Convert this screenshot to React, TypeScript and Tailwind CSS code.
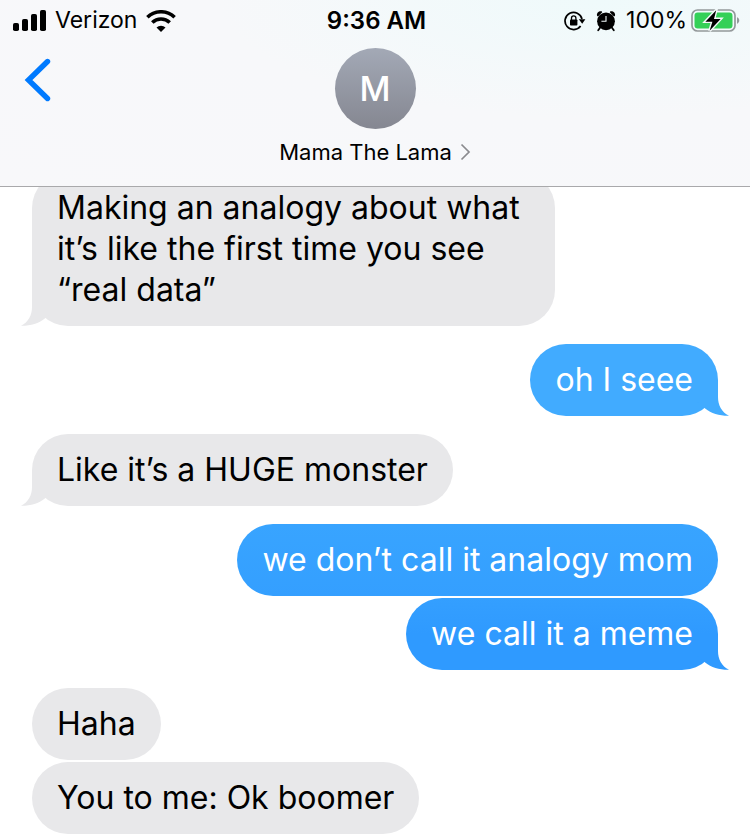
import clsx from "clsx";

interface IMessage {
  text: string;
  fromMe: boolean;
  tail?: boolean;
  color: string;
  tailColor: string;
}

const messages: IMessage[] = [
  {
    text: "Making an analogy about what it’s like the first time you see “real data”",
    fromMe: false,
    tail: true,
    color: "bg-[#e8e8ea]",
    tailColor: "text-[#e8e8ea]",
  },
  {
    text: "oh I seee",
    fromMe: true,
    tail: true,
    color: "bg-[#41abff]",
    tailColor: "text-[#41abff]",
  },
  {
    text: "Like it’s a HUGE monster",
    fromMe: false,
    tail: true,
    color: "bg-[#e8e8ea]",
    tailColor: "text-[#e8e8ea]",
  },
  {
    text: "we don’t call it analogy mom",
    fromMe: true,
    color: "bg-linear-to-b from-[#38a4ff] to-[#349fff]",
    tailColor: "",
  },
  {
    text: "we call it a meme",
    fromMe: true,
    tail: true,
    color: "bg-linear-to-b from-[#349fff] to-[#2f9aff] to-50%",
    tailColor: "text-[#2f9aff]",
  },
  {
    text: "Haha",
    fromMe: false,
    color: "bg-[#e8e8ea]",
    tailColor: "",
  },
  {
    text: "You to me: Ok boomer",
    fromMe: false,
    color: "bg-[#e8e8ea]",
    tailColor: "",
  },
];

const SignalIcon = () => (
  <svg width="33" height="22" viewBox="0 0 33 22" fill="#000">
    <rect x="0" y="13" width="6" height="8" rx="1.8" />
    <rect x="9" y="9" width="6" height="12" rx="1.8" />
    <rect x="18" y="4" width="6" height="17" rx="1.8" />
    <rect x="27" y="0" width="6" height="21" rx="1.8" />
  </svg>
);

const WifiIcon = () => (
  <svg width="30" height="22" viewBox="0 0 30 22" fill="none">
    <path d="M1.400 7.300A19.500 19.500 0 0 1 28.600 7.300" stroke="#000" strokeWidth="3.600" />
    <path d="M6.300 12.500A12.500 12.500 0 0 1 23.700 12.500" stroke="#000" strokeWidth="3.600" />
    <path d="M10.500 17.400a6.700 6.700 0 0 1 9 0L15 22z" fill="#000" />
  </svg>
);

const RotationLockIcon = () => (
  <svg width="22" height="20" viewBox="0 0 22 20" fill="none">
    <path d="M18 8A8.600 8.600 0 1 0 16.600 15" stroke="#000" strokeWidth="1.700" />
    <path d="M14.800 8.200h6.600L18.200 12.800z" fill="#000" />
    <rect x="6" y="8.500" width="7.400" height="6" rx="0.800" fill="#000" />
    <path d="M7.500 9V7.100a2.200 2.200 0 0 1 4.400 0V9" stroke="#000" strokeWidth="1.300" />
  </svg>
);

const AlarmIcon = () => (
  <svg width="20" height="22" viewBox="0 0 20 22" fill="none">
    <circle cx="10" cy="11.300" r="8.900" fill="#000" />
    <path d="M1 5.800C.4 3 2.800 .7 5.700 1.300L6.200 2.200L2 6.400z" fill="#000" />
    <path d="M19 5.800C19.600 3 17.200 .7 14.300 1.300L13.800 2.200L18 6.400z" fill="#000" />
    <path d="M4.200 17.500L2.200 20.300M15.800 17.500L17.800 20.300" stroke="#000" strokeWidth="1.800" strokeLinecap="round" />
    <path d="M10 6V11.300H5.400" stroke="#f1f9fa" strokeWidth="1.100" />
  </svg>
);

const BatteryIcon = () => (
  <svg width="49" height="24" viewBox="0 0 49 24" fill="none">
    <rect x="1" y="1" width="43" height="21" rx="5.500" stroke="#94999b" strokeWidth="1.700" />
    <path d="M46 8.300c3 1 3 5.400 0 6.400z" fill="#94999b" />
    <rect x="3.500" y="3.500" width="38" height="16" rx="3.200" fill="#34d058" />
    <path
      d="M25.200 1.200L14.400 12.700H21.400L18.600 21.800L29.600 10H23z"
      fill="#000"
      stroke="#f4fafb"
      strokeWidth="2.800"
      paintOrder="stroke"
    />
  </svg>
);

const BubbleTail = ({ fromMe, className }: { fromMe: boolean; className: string }) => (
  <svg
    width="34"
    height="36"
    viewBox="0 0 34 36"
    fill="currentColor"
    className={clsx(
      "absolute bottom-0",
      fromMe ? "-right-[11px] -scale-x-100" : "-left-[11px]",
      className
    )}
  >
    <path d="M11 0V17C11 25 7.500 32 0 35.800C9 36 18 33.500 23.500 28.800L34 20V0z" />
  </svg>
);

const StatusBar = () => {
  return (
    <div className="grid grid-cols-[1fr_auto_1fr] items-center h-[41px] pl-[13px] pr-[10px] text-[23px]">
      <div className="flex items-center gap-[9px]">
        <SignalIcon />
        <span>Verizon</span>
        <WifiIcon />
      </div>
      <span className="font-semibold text-2xl">9:36 AM</span>
      <div className="flex items-center justify-end">
        <RotationLockIcon />
        <span className="ml-[10px]">
          <AlarmIcon />
        </span>
        <span className="ml-[10px] mr-1">100%</span>
        <BatteryIcon />
      </div>
    </div>
  );
};

const ChatHeader = () => {
  return (
    <header className="relative z-10 border-b border-[#a9a9ab] bg-[#f8f8fa] bg-[radial-gradient(ellipse_at_80%_0%,#effafb_0%,#f7f8fa_45%,#f8f8fa_100%)]">
      <StatusBar />
      <div className="grid grid-cols-[1fr_auto_1fr] items-start pt-[7px] pb-[18px]">
        <button type="button" aria-label="Back" className="justify-self-start ml-6 mt-[10px]">
          <svg width="28" height="44" viewBox="0 0 28 44" fill="none">
            <path
              d="M23.500 3.500L4.500 22L23.500 40.500"
              stroke="#007aff"
              strokeWidth="5.400"
              strokeLinecap="round"
            />
          </svg>
        </button>
        <button type="button" className="flex flex-col items-center">
          <span className="flex items-center justify-center size-[81px] rounded-full bg-linear-to-b from-[#a3a9b6] to-[#858791] text-white text-[34px] font-medium">
            M
          </span>
          <span className="flex items-center gap-2 mt-[7px] text-[22px] leading-8">
            Mama The Lama
            <svg width="11" height="18" viewBox="0 0 11 18" fill="none">
              <path d="M1.500 1.500L9 9L1.500 16.500" stroke="#8a8a8e" strokeWidth="1.700" />
            </svg>
          </span>
        </button>
      </div>
    </header>
  );
};

const MessageBubble = ({ message, grouped }: { message: IMessage; grouped: boolean }) => {
  return (
    <li
      className={clsx(
        "relative w-fit max-w-[523px] px-[25px] pt-[15px] pb-4 rounded-[36px] text-[32px] leading-[41px]",
        message.fromMe ? "self-end text-white" : "self-start text-black",
        grouped ? "mt-[2px]" : "mt-[18px]",
        message.color
      )}
    >
      {message.tail && <BubbleTail fromMe={message.fromMe} className={message.tailColor} />}
      <span className="relative">{message.text}</span>
    </li>
  );
};

const App = () => {
  return (
    <div className="min-h-screen bg-white text-black font-[Inter,sans-serif]">
      <ChatHeader />
      {/* first bubble is scrolled partly under the header */}
      <ul className="flex flex-col -mt-[33px] px-8">
        {messages.map((message, index) => (
          <MessageBubble
            key={index}
            message={message}
            grouped={index > 0 && messages[index - 1].fromMe === message.fromMe}
          />
        ))}
      </ul>
    </div>
  );
};

export default App;
